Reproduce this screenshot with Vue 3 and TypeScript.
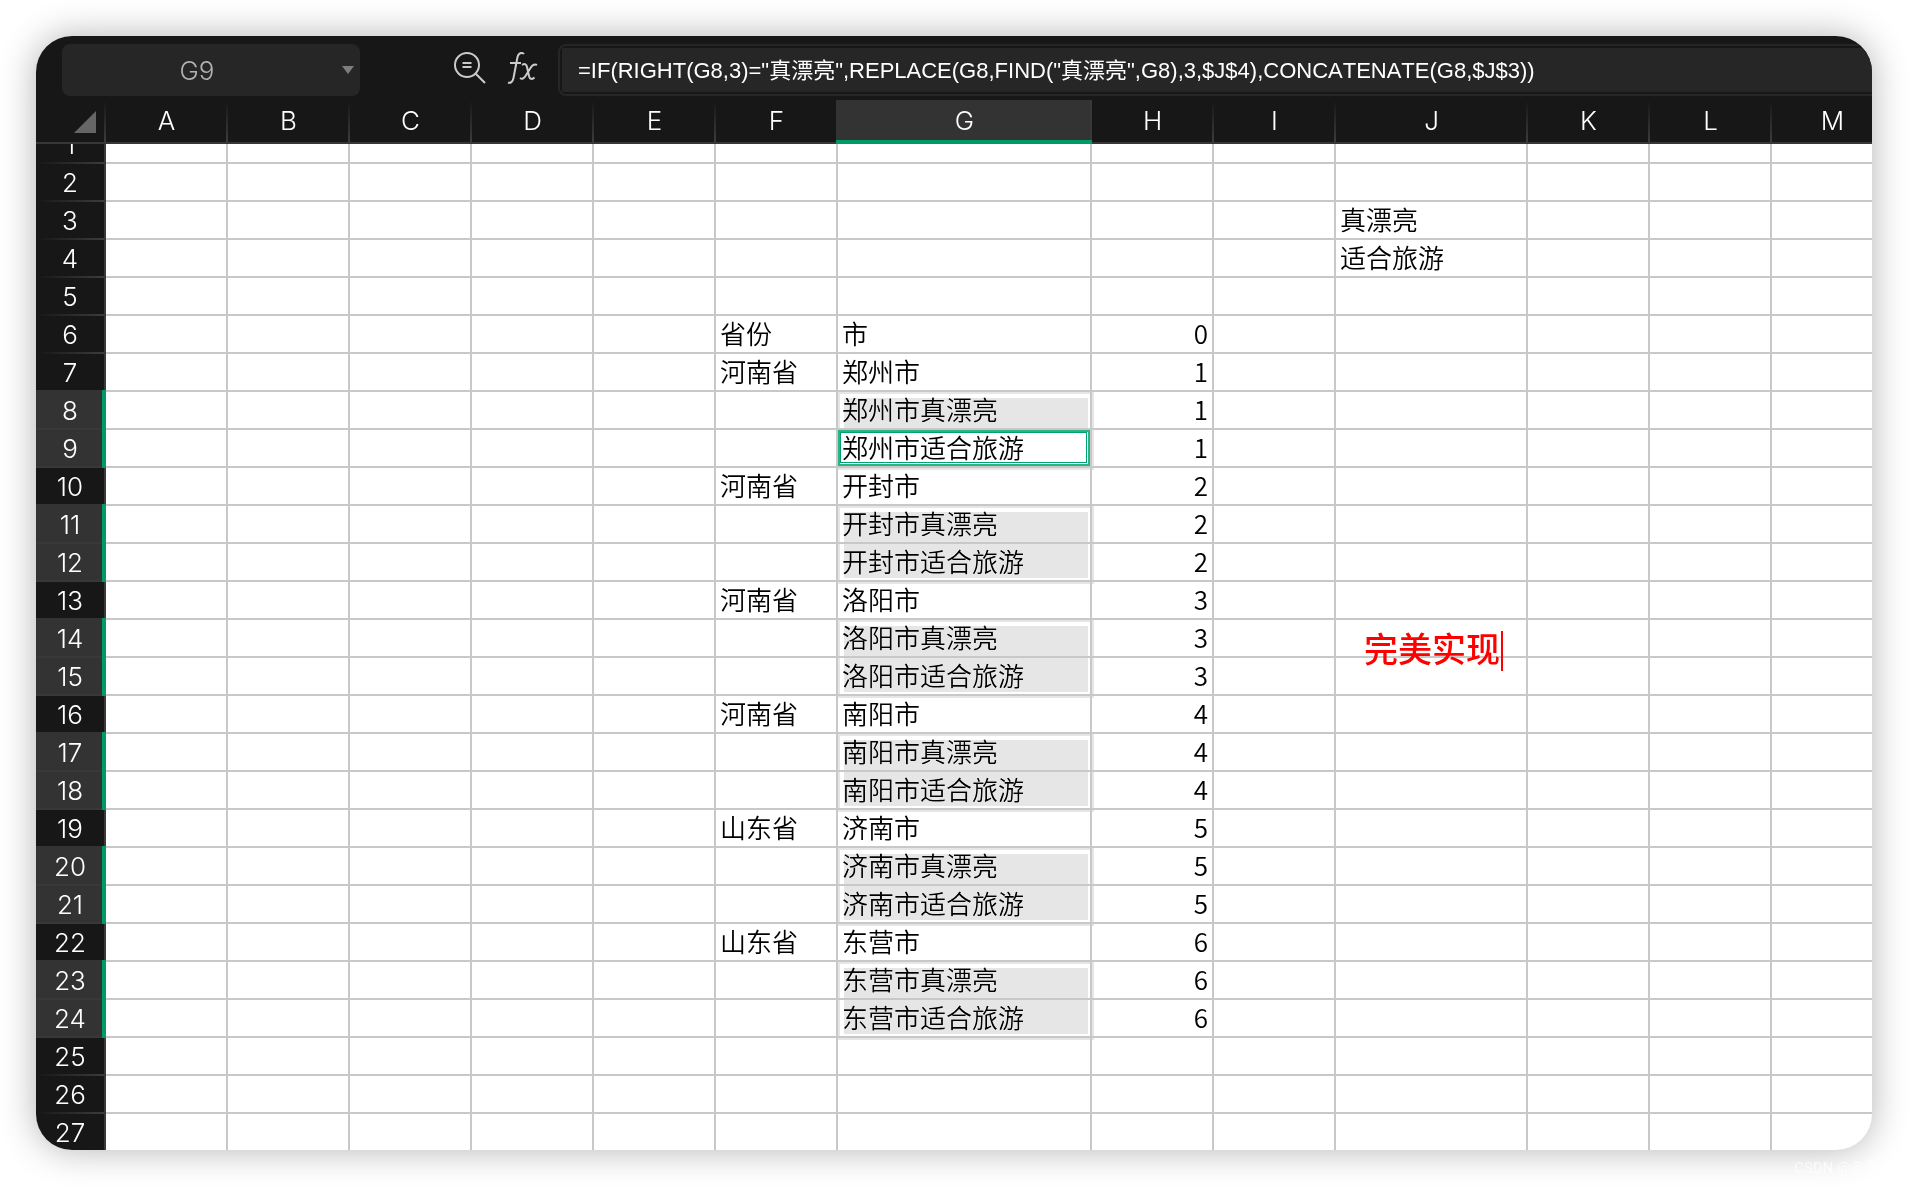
<script setup lang="ts">
import { ref } from 'vue'

interface Column {
  name: string
  width: number
}

interface Row {
  n: number
  province?: string
  city?: string
  count?: number
  note?: string
  picked?: boolean
}

const columns: Column[] = 'ABCDEFGHIJKLM'.split('').map((name) => ({
  name,
  width: name === 'G' ? 254 : name === 'J' ? 192 : 122,
}))

const formula = ref(
  '=IF(RIGHT(G8,3)="真漂亮",REPLACE(G8,FIND("真漂亮",G8),3,$J$4),CONCATENATE(G8,$J$3))',
)
const cellName = ref('G9')

const groups: [string, string][] = [
  ['河南省', '郑州市'],
  ['河南省', '开封市'],
  ['河南省', '洛阳市'],
  ['河南省', '南阳市'],
  ['山东省', '济南市'],
  ['山东省', '东营市'],
]

const rows: Row[] = [
  { n: 1 },
  { n: 2 },
  { n: 3, note: '真漂亮' },
  { n: 4, note: '适合旅游' },
  { n: 5 },
  { n: 6, province: '省份', city: '市', count: 0 },
]
groups.forEach(([province, city], i) => {
  const n = 7 + i * 3
  const count = i + 1
  rows.push({ n, province, city, count })
  rows.push({ n: n + 1, city: city + '真漂亮', count, picked: true })
  rows.push({ n: n + 2, city: city + '适合旅游', count, picked: true })
})
rows.push({ n: 25 }, { n: 26 }, { n: 27 })

function cellText(row: Row, col: string): string {
  if (col === 'F') return row.province ?? ''
  if (col === 'G') return row.city ?? ''
  if (col === 'H') return row.count === undefined ? '' : String(row.count)
  if (col === 'J') return row.note ?? ''
  return ''
}

function startsRange(row: Row): boolean {
  return !!row.picked && (row.n - 8) % 3 === 0
}
</script>

<template>
  <main class="page">
    <section class="window">
      <header class="toolbar">
        <div class="name-box">
          <input v-model="cellName" class="name-input" aria-label="Name box" />
          <button class="name-toggle" type="button" aria-label="Choose a cell">
            <svg width="12" height="8" viewBox="0 0 12 8"><path d="M0 0h12L6 8z" fill="#7d7d7d" /></svg>
          </button>
        </div>
        <div class="tools">
          <button class="tool" type="button" aria-label="Find formula">
            <svg width="34" height="34" viewBox="0 0 34 34" fill="none" stroke="#cbcbcb" stroke-width="2">
              <circle cx="14" cy="14" r="12" />
              <path d="M9.500 12h9M9.500 16h9M22.500 22.500L32 32" />
            </svg>
          </button>
          <button class="tool" type="button" aria-label="Insert function">
            <svg width="32" height="34" viewBox="0 0 32 34" fill="none" stroke="#cbcbcb" stroke-width="2">
              <path d="M17 3c-1-1.500-5-2-6.500 3L6.500 27c-.8 4-3 5.500-5.500 4.500M3 12h11" />
              <path d="M15 14c3-2 4.500-.5 5 2l2 9c.6 3 3 4 5.500 1.500M30 14c-3-1.500-5 .5-6.500 3l-5 8c-1.500 2.500-3.500 3.500-5.500 2" />
            </svg>
          </button>
        </div>
        <div class="formula-box">
          <input v-model="formula" class="formula-input" aria-label="Formula" />
        </div>
      </header>

      <div class="sheet">
        <table class="grid">
          <colgroup>
            <col class="col-index" />
            <col v-for="c in columns" :key="c.name" :style="{ width: c.width + 'px' }" />
          </colgroup>
          <thead>
            <tr>
              <th class="corner" aria-label="Select all">
                <svg class="corner-mark" width="22" height="22" viewBox="0 0 22 22"><path d="M22 0v22H0z" fill="#666" /></svg>
              </th>
              <th v-for="c in columns" :key="c.name" class="col-head" :class="{ active: c.name === 'G' }" scope="col">
                {{ c.name }}
              </th>
            </tr>
          </thead>
          <tbody>
            <tr v-for="row in rows" :key="row.n" :class="{ first: row.n === 1, last: row.n === 27 }">
              <th class="row-head" :class="{ active: row.picked, lead: startsRange(row) }" scope="row">
                <span class="row-label"><span>{{ row.n }}</span></span>
              </th>
              <td v-for="c in columns" :key="c.name" :class="{ number: c.name === 'H' }">
                <span v-if="c.name === 'G' && startsRange(row)" class="range"></span>
                <span v-if="c.name === 'G' && row.n === 9" class="cursor"></span>
                <span class="value">{{ cellText(row, c.name) }}</span>
                <span v-if="c.name === 'J' && row.n === 14" class="annotation">完美实现</span>
              </td>
            </tr>
          </tbody>
        </table>
      </div>
    </section>
    <footer class="watermark">CSDN @@素素</footer>
  </main>
</template>

<style>
body {
  margin: 0;
  background: #fff;
}
</style>

<style scoped>
.page {
  position: relative;
  padding: 36px;
  overflow: hidden;
  font-family: Inter, 'Noto Sans CJK SC', sans-serif;
}
.window {
  overflow: hidden;
  border-radius: 36px;
  background: #fff;
  box-shadow: 0 0 36px rgba(0, 0, 0, 0.3);
}
.toolbar {
  box-sizing: border-box;
  display: flex;
  align-items: center;
  height: 64px;
  padding: 4px 0 0 26px;
  background: #171717;
}
.name-box {
  position: relative;
  flex: none;
  width: 298px;
  height: 52px;
  border-radius: 8px;
  background: #262626;
}
input {
  box-sizing: border-box;
  border: 0;
  outline: 0;
  background: none;
  font-family: inherit;
}
.name-input {
  width: 270px;
  height: 52px;
  padding: 0;
  color: #b0b0b0;
  font-size: 26px;
  font-weight: 300;
  text-align: center;
}
.name-toggle {
  position: absolute;
  top: 0;
  right: 0;
  width: 24px;
  height: 52px;
}
button {
  display: flex;
  align-items: center;
  justify-content: center;
  padding: 0;
  border: 0;
  background: none;
}
.tools {
  display: flex;
  flex: none;
  gap: 20px;
  width: 105px;
  padding: 0 0 4px 93px;
}
.formula-box {
  box-sizing: border-box;
  flex: 1;
  height: 52px;
  padding: 2px 0 2px 2px;
  border: 2px solid #262626;
  border-right: 0;
  border-radius: 8px 0 0 8px;
}
.formula-input {
  display: block;
  width: 100%;
  height: 44px;
  padding: 0 16px 4px;
  background: #262626;
  color: #fff;
  font-family: 'Liberation Sans', 'Noto Sans CJK SC', sans-serif;
  font-size: 22px;
  font-kerning: none;
}
.grid {
  width: 100%;
  table-layout: fixed;
  border-collapse: separate;
  border-spacing: 0;
}
.col-index {
  width: 70px;
}
th,
td {
  box-sizing: border-box;
  padding: 0;
}
th {
  color: #fff;
  font-size: 26px;
  font-weight: 300;
  background: #171717;
}
.corner,
.col-head {
  position: relative;
  height: 44px;
  border-bottom: 2px solid #3a3638;
  line-height: 42px;
}
.corner::after,
.col-head::after {
  content: '';
  position: absolute;
  top: 0;
  right: 0;
  width: 2px;
  height: 42px;
  background: linear-gradient(#171717, #3c3c3c);
}
.col-head {
  padding-right: 1px;
}
.col-head.active {
  padding-top: 2px;
  border-bottom: 4px solid #009a67;
  background: #333;
  line-height: 38px;
}
.col-head.active::before {
  content: '';
  position: absolute;
  top: 0;
  bottom: -4px;
  left: -2px;
  width: 2px;
  border-bottom: 4px solid #009a67;
  box-sizing: border-box;
  background: #333;
}
.col-head.active::after {
  height: 40px;
  background: #383838;
}
.corner-mark {
  display: block;
  margin: 2px 0 0 38px;
}
.row-head {
  position: relative;
  height: 38px;
  border-right: 2px solid #3c393a;
}
.row-head::after {
  content: '';
  position: absolute;
  right: 0;
  bottom: 0;
  left: 0;
  height: 2px;
  background: linear-gradient(90deg, #171717, #3c3c3c);
}
.row-label {
  box-sizing: border-box;
  display: flex;
  flex-direction: column;
  justify-content: flex-end;
  height: 38px;
  overflow: hidden;
  line-height: 38px;
}
.row-head.active {
  border-right: 4px solid #009a67;
  background: #333;
}
.row-head.active .row-label {
  padding-left: 2px;
}
.row-head.active::after {
  background: #383838;
}
.row-head.lead::before {
  content: '';
  position: absolute;
  top: -2px;
  right: -4px;
  left: 0;
  height: 2px;
  border-right: 4px solid #009a67;
  background: #333;
}
td {
  position: relative;
  height: 38px;
  padding: 0 4px;
  border-right: 2px solid #c8c8c8;
  border-bottom: 2px solid #c8c8c8;
  color: #000;
  font-family: 'Noto Sans CJK SC', sans-serif;
  font-size: 26px;
  font-weight: 350;
  line-height: 34px;
  white-space: nowrap;
}
.value {
  display: block;
  height: 36px;
}
.number {
  text-align: right;
}
.first .row-head,
.first td {
  height: 20px;
}
.first .row-label {
  height: 20px;
}
.first .value {
  height: 18px;
}
.last .row-head,
.last td {
  height: 36px;
  border-bottom: 0;
}
.last .row-label {
  justify-content: flex-start;
  height: 36px;
}
.last .row-head::after {
  display: none;
}
/* Gray frame and fill of a two-row range; the grid lines stay visible through it. */
.range {
  position: absolute;
  z-index: 1;
  top: 0;
  left: 0;
  box-sizing: border-box;
  width: 256px;
  height: 78px;
  padding: 4px;
  border: 2px solid #e6e6e6;
  mix-blend-mode: darken;
}
.range::before {
  content: '';
  display: block;
  width: 244px;
  height: 66px;
  background: #e6e6e6;
}
.cursor {
  position: absolute;
  z-index: 2;
  top: 0;
  left: 0;
  box-sizing: border-box;
  width: 252px;
  height: 36px;
  border: 2px solid #29b482;
  background: #fff;
}
.cursor::before {
  content: '';
  position: absolute;
  inset: 0 1px 1px 0;
  border: 1px solid #00a36c;
}
.cursor + .value {
  position: relative;
  z-index: 3;
}
.annotation {
  position: absolute;
  z-index: 1;
  top: 11px;
  left: 28px;
  height: 40px;
  padding-right: 1px;
  border-right: 2px solid #f00;
  color: #f00;
  font-size: 34px;
  font-weight: 500;
  line-height: 34px;
}
.watermark {
  position: absolute;
  right: 0;
  bottom: 8px;
  width: 114px;
  overflow: hidden;
  color: rgba(255, 255, 255, 0.7);
  font-family: Roboto, 'Noto Sans CJK SC', sans-serif;
  font-size: 15px;
  line-height: 20px;
  white-space: nowrap;
}
</style>
